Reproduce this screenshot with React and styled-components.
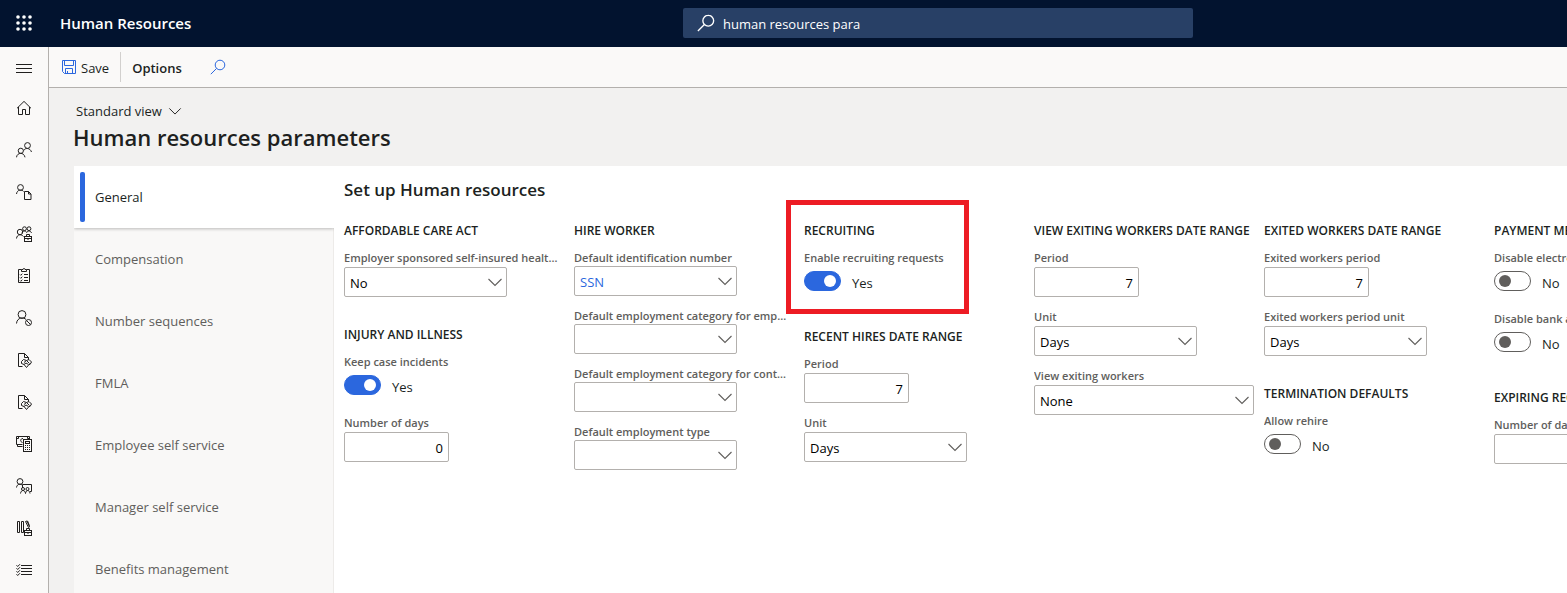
import React, { useId } from "react";
import styled, { createGlobalStyle, css } from "styled-components";

const GlobalStyle = createGlobalStyle`
  * { box-sizing: border-box; }
  body {
    margin: 0;
    font-family: "Open Sans", "Noto Sans", sans-serif;
    font-size: 13px;
    line-height: 20px;
    color: #201f1e;
    background: #f2f1f0;
  }
  button, input, select { font: inherit; color: inherit; margin: 0; }
`;

const Page = styled.div`
  height: 100vh;
  display: flex;
  flex-direction: column;
  overflow: hidden;
`;

const Header = styled.header`
  flex: none;
  height: 47px;
  padding-bottom: 1px;
  display: grid;
  grid-template-columns: 48px minmax(200px, 635px) minmax(200px, 510px) 1fr;
  align-items: center;
  background: #02132f;
  color: #fff;
`;

const iconButton = css`
  display: flex;
  align-items: center;
  justify-content: center;
  padding: 0;
  border: 0;
  background: none;
`;

const Waffle = styled.button`
  ${iconButton}
  height: 46px;
`;

const Product = styled.span`
  padding-left: 12px;
  font-size: 15px;
  font-weight: 600;
`;

const SearchBox = styled.label`
  height: 30px;
  display: flex;
  align-items: center;
  gap: 8px;
  padding: 0 14px;
  border-radius: 2px;
  background: #284066;
  input {
    flex: 1;
    min-width: 0;
    padding: 2px 0 0;
    border: 0;
    outline: 0;
    background: none;
    color: #fff;
  }
`;

const Body = styled.div`
  flex: 1;
  min-height: 0;
  display: flex;
`;

const Rail = styled.nav`
  flex: none;
  width: 49px;
  border-right: 1px solid #b3b0ad;
  background: #faf9f8;
`;

const RailButton = styled.button`
  ${iconButton}
  width: 48px;
  height: ${(p) => (p.$menu ? 40 : 42)}px;
`;

const Main = styled.main`
  flex: 1;
  min-width: 0;
  display: flex;
  flex-direction: column;
`;

const ActionBar = styled.div`
  flex: none;
  height: 41px;
  display: flex;
  align-items: center;
  border-bottom: 1px solid #b3b0ad;
  padding-left: 12px;
  background: #faf9f8;
`;

const Action = styled.button`
  ${iconButton}
  gap: 4px;
  padding-top: 2px;
  font-weight: ${(p) => (p.$strong ? 600 : 400)};
  svg { margin-bottom: 2px; }
`;

const Divider = styled.span`
  width: 1px;
  height: 30px;
  margin: 0 11px;
  background: #d2d0ce;
`;

const Finder = styled(Action)`
  margin-left: 28px;
`;

const PageHead = styled.div`
  flex: none;
  height: 78px;
  padding: 13px 0 0 24px;
`;

const ViewButton = styled.button`
  ${iconButton}
  gap: 6px;
  height: 20px;
  padding-left: 3px;
`;

const Title = styled.h1`
  margin: 0;
  font-size: 22px;
  line-height: 32px;
  font-weight: 600;
`;

const Panel = styled.section`
  flex: 1;
  min-height: 0;
  display: flex;
  margin-left: 25px;
  background: #fff;
`;

const Tabs = styled.div`
  flex: none;
  width: 260px;
  background: #f9f8f7;
  border-right: 1px solid #edebe9;
`;

const Tab = styled.button`
  display: flex;
  align-items: center;
  gap: 10px;
  width: 260px;
  height: 62px;
  padding: 0 6px;
  border: 0;
  background: ${(p) => (p.$active ? "#fff" : "none")};
  color: ${(p) => (p.$active ? "#201f1e" : "#605e5c")};
  box-shadow: ${(p) => (p.$active ? "0 1px 3px rgba(0, 0, 0, 0.25)" : "none")};
  clip-path: ${(p) => (p.$active ? "inset(0 0 -6px 0)" : "none")};
  &::before {
    content: "";
    width: 5px;
    height: 50px;
    border-radius: 2px;
    background: ${(p) => (p.$active ? "#2b67de" : "transparent")};
  }
`;

const Content = styled.div`
  flex: 1;
  min-width: 0;
  overflow: hidden;
  padding: 12px 0 0 10px;
`;

const SectionTitle = styled.h2`
  margin: 0 0 20px;
  font-size: 17px;
  line-height: 24px;
  font-weight: 600;
`;

const Columns = styled.div`
  display: grid;
  grid-auto-flow: column;
  grid-auto-columns: 220px;
  column-gap: 10px;
`;

const Column = styled.div`
  display: flex;
  flex-direction: column;
  gap: 29px;
`;

const GroupBox = styled.section`
  position: relative;
`;

const GroupTitle = styled.h3`
  margin: 0 0 10px;
  font-size: 12px;
  line-height: 18px;
  font-weight: 600;
  white-space: nowrap;
`;

const Fields = styled.div`
  display: flex;
  flex-direction: column;
  gap: 12px;
`;

const Highlight = styled.span`
  position: absolute;
  top: -22px;
  left: -18px;
  width: 183px;
  height: 114px;
  border: 5px solid #ed1c24;
  pointer-events: none;
`;

const FieldBox = styled.div`
  display: flex;
  flex-direction: column;
  gap: ${(p) => (p.$dense ? 0 : 1)}px;
`;

const FieldLabel = styled.label`
  max-width: 214px;
  overflow: hidden;
  font-size: 11px;
  line-height: 16px;
  font-weight: 600;
  color: #605e5c;
  white-space: nowrap;
  text-overflow: ellipsis;
`;

const control = css`
  height: 30px;
  border: 1px solid #b3b0ad;
  border-radius: 2px;
  background: #fff;
`;

const NumberInput = styled.input`
  ${control}
  width: 105px;
  padding: 2px 5px 0;
  color: #000;
  text-align: right;
`;

const SelectWrap = styled.div`
  display: grid;
  align-items: center;
  width: ${(p) => (p.$wide ? 220 : 163)}px;
  select, svg { grid-area: 1 / 1; }
  svg { justify-self: end; margin-right: 4px; pointer-events: none; }
`;

const Select = styled.select`
  ${control}
  width: 100%;
  padding: 2px 5px 0;
  appearance: none;
  color: ${(p) => (p.$link ? "#2b67de" : "#000")};
`;

const ToggleRow = styled.div`
  height: 32px;
  display: flex;
  align-items: center;
  gap: 11px;
`;

const Toggle = styled.input`
  appearance: none;
  width: 37px;
  height: 20px;
  margin-bottom: 4px;
  display: flex;
  align-items: center;
  padding: 0 4px;
  border: 1px solid #605e5c;
  border-radius: 10px;
  background: #fff;
  &::before {
    content: "";
    width: 12px;
    height: 12px;
    border-radius: 50%;
    background: #605e5c;
  }
  &:checked {
    justify-content: flex-end;
    border-color: #2b67de;
    background: #2b67de;
  }
  &:checked::before { background: #fff; }
`;

const Svg = ({ size = 16, color = "#201f1e", children }) => (
  <svg width={size} height={size} viewBox={`0 0 ${size} ${size}`} fill="none" stroke={color} strokeWidth="1" aria-hidden="true">
    {children}
  </svg>
);

const Chevron = ({ width = 16, color = "#605e5c" }) => (
  <svg width={width} height="16" viewBox="0 0 16 16" fill="none" stroke={color} strokeWidth="1.1" aria-hidden="true">
    <path d="M1.500 5 8 11.500 14.500 5" />
  </svg>
);

const Magnifier = ({ color, size = 16, weight = 1 }) => (
  <svg width={size} height={size} viewBox="0 0 16 16" fill="none" stroke={color} strokeWidth={weight} aria-hidden="true">
    <circle cx="10" cy="6" r="4.800" />
    <path d="M6.600 9.400 0.800 15.200" />
  </svg>
);

const LockCase = () => (
  <>
    <rect x="8.500" y="10.500" width="7" height="5" fill="#faf9f8" />
    <path d="M10.500 10V8.500h3V10M8.500 12.500h7M12 12v2" />
  </>
);

const DocHands = () => (
  <Svg>
    <path d="M6.500 14.500h-4v-13h6l4 4v2M8.500 1.500v4h4" />
    <path d="M5.500 9.500 7.500 7.500l3 1 2.500-1 2.500 2.500-1.500 2.500h-1L10.500 15.500 8 12.500 5.500 11.500zM8 10.500l2.500-2 3 3M8 12.500l2-1.500 2.500 1.500" />
  </Svg>
);

const railIcons = [
  ["Expand the navigation pane", <Svg><path d="M0 5.500h16M0 9.500h16M0 13.500h16" /></Svg>],
  ["Home", <Svg><path d="M1 8.300 8 1.400l7 6.900M2.500 7v7.500h4v-5h3v5h4V7" /></Svg>],
  ["Personnel management", <Svg><circle cx="11.500" cy="3.500" r="2.900" /><path d="M7.800 8.500C8.800 5.700 14 5.500 15.500 10" /><circle cx="4.800" cy="8.800" r="2.600" /><path d="M.5 15.300c.5-5 7.500-5.500 8.500 0" /></Svg>],
  ["Employee self service", <Svg><circle cx="4.500" cy="3.500" r="2.900" /><path d="M.5 10c.5-4.500 5.500-5 7-2.500M8.500 7.500h4l2.500 2.500v5.500H8.500zM12.500 7.500V10H15" /></Svg>],
  ["Manager self service", <Svg><circle cx="4" cy="6" r="2.700" /><path d="M.5 12.500C1 8 5.500 8 7.500 10.500" /><circle cx="8.500" cy="2.700" r="1.900" /><circle cx="13" cy="2.700" r="1.900" /><path d="M6 6.800C7 4.500 10 4.500 10.700 6.500 11.500 4.500 14.800 4.500 15.500 7" /><LockCase /></Svg>],
  ["Compliance", <Svg><path d="M5.500 1.500h-3v13h11v-13h-3M5.500 3.500v-2h1.500a1 1 0 0 1 2 0h1.500v2zM8 6.500h4M8 9.500h4M8 12.500h4M4 6.500l.8.800L6.300 5.700M4 9.500l.8.800 1.500-1.600M4 12.500l.8.800 1.500-1.600" /></Svg>],
  ["Leave and absence", <Svg><circle cx="6" cy="4.500" r="3.900" /><path d="M.5 13.500C1 7 8 7 10 9.500" /><circle cx="12.500" cy="12.500" r="3" /><path d="m10.500 10.500 4 4" /></Svg>],
  ["Benefits management", <DocHands />],
  ["Benefits", <DocHands />],
  ["Payroll", <Svg><path d="M6.500 8.500h-6v-8h13v3M1.500 8.500v2h5M2.500.5v2h-2M7 2.500C4 2.500 4 6 6.500 6.500M11.500.5v2h2" /><rect x="7.500" y="3.500" width="8" height="12" /><rect x="9.500" y="5.500" width="4" height="2" /><path d="M9 9.500h6M9 11.500h6M9 13.500h6" strokeDasharray="1 1" /></Svg>],
  ["Learning", <Svg><circle cx="4" cy="3.500" r="2.900" /><path d="M.5 9.500C1 5.500 5 5.500 6.500 7.500V6.500h9v7H14M6.500 7v3" /><circle cx="7" cy="11" r="1.500" /><circle cx="11.500" cy="11" r="1.500" /><path d="M4.500 15.500c.5-4 4.500-4 5 0 .5-4 4-4 4.500 0" /></Svg>],
  ["Organization administration", <Svg><path d="M1.500 1.500h2v11h-2zM5.500 1.500h2v11h-2zM9.500 1.500l1.500-.5 2.500 6-1 .5zM11.500.800l2 5" /><LockCase /></Svg>],
  ["Task list", <Svg><path d="M5 3.500h11M5 6.500h11M5 9.500h11M5 12.500h11" /><path d="m.5 3.200 1.200 1.300L4 2.200M.5 6.200l1.200 1.300L4 5.200M.5 9.200l1.200 1.300L4 8.200M.5 12.200l1.200 1.300L4 11.200" /></Svg>],
];

const tabs = ["General", "Compensation", "Number sequences", "FMLA", "Employee self service", "Manager self service", "Benefits management"];

const columns = [
  [
    { title: "AFFORDABLE CARE ACT", fields: [{ type: "select", label: "Employer sponsored self-insured health coverage", value: "No" }] },
    { title: "INJURY AND ILLNESS", fields: [{ type: "toggle", label: "Keep case incidents", on: true }, { type: "number", label: "Number of days", value: "0" }] },
  ],
  [
    {
      title: "HIRE WORKER",
      dense: true,
      fields: [
        { type: "select", label: "Default identification number", value: "SSN", link: true },
        { type: "select", label: "Default employment category for employees", value: "" },
        { type: "select", label: "Default employment category for contractors", value: "" },
        { type: "select", label: "Default employment type", value: "" },
      ],
    },
  ],
  [
    { title: "RECRUITING", highlight: true, fields: [{ type: "toggle", label: "Enable recruiting requests", on: true }] },
    { title: "RECENT HIRES DATE RANGE", fields: [{ type: "number", label: "Period", value: "7" }, { type: "select", label: "Unit", value: "Days" }] },
  ],
  [
    {
      title: "VIEW EXITING WORKERS DATE RANGE",
      fields: [
        { type: "number", label: "Period", value: "7" },
        { type: "select", label: "Unit", value: "Days" },
        { type: "select", label: "View exiting workers", value: "None", wide: true },
      ],
    },
  ],
  [
    { title: "EXITED WORKERS DATE RANGE", fields: [{ type: "number", label: "Exited workers period", value: "7" }, { type: "select", label: "Exited workers period unit", value: "Days" }] },
    { title: "TERMINATION DEFAULTS", fields: [{ type: "toggle", label: "Allow rehire", on: false }] },
  ],
  [
    { title: "PAYMENT METHODS", fields: [{ type: "toggle", label: "Disable electronic payments", on: false }, { type: "toggle", label: "Disable bank accounts", on: false }] },
    { title: "EXPIRING RECORDS", fields: [{ type: "number", label: "Number of days", value: "0" }] },
  ],
];

function Field({ type, label, value, on, link, wide, dense }) {
  const id = useId();
  return (
    <FieldBox $dense={dense}>
      <FieldLabel htmlFor={id}>{label}</FieldLabel>
      {type === "number" && <NumberInput id={id} defaultValue={value} inputMode="numeric" />}
      {type === "select" && (
        <SelectWrap $wide={wide}>
          <Select id={id} defaultValue={value} $link={link}>
            <option>{value}</option>
          </Select>
          <Chevron />
        </SelectWrap>
      )}
      {type === "toggle" && (
        <ToggleRow>
          <Toggle id={id} type="checkbox" role="switch" defaultChecked={on} />
          <span>{on ? "Yes" : "No"}</span>
        </ToggleRow>
      )}
    </FieldBox>
  );
}

function Group({ title, fields, highlight, dense }) {
  return (
    <GroupBox>
      <GroupTitle>{title}</GroupTitle>
      <Fields>
        {fields.map((f) => (
          <Field key={f.label} dense={dense} {...f} />
        ))}
      </Fields>
      {highlight && <Highlight />}
    </GroupBox>
  );
}

export default function App() {
  return (
    <Page>
      <GlobalStyle />
      <Header>
        <Waffle aria-label="App launcher">
          <svg width="16" height="16" viewBox="0 0 16 16" fill="#fff" aria-hidden="true">
            {[0, 6, 12].map((y) => [0, 6, 12].map((x) => <circle key={`${x}-${y}`} cx={x + 2} cy={y + 2} r="1.800" />))}
          </svg>
        </Waffle>
        <Product>Human Resources</Product>
        <SearchBox>
          <Magnifier color="#fff" size={18} weight={1.2} />
          <input aria-label="Search for a page" defaultValue="human resources para" />
        </SearchBox>
      </Header>
      <Body>
        <Rail>
          {railIcons.map(([name, icon], i) => (
            <RailButton key={name} aria-label={name} $menu={i === 0}>
              {icon}
            </RailButton>
          ))}
        </Rail>
        <Main>
          <ActionBar>
            <Action>
              <Svg color="#2b67de">
                <path d="M1.500 1.500h13v13h-11l-2-2zM3.500 1.500v5h9v-5M4.500 14.500v-5h7v5M6.500 12v2.500" />
              </Svg>
              Save
            </Action>
            <Divider />
            <Action $strong>Options</Action>
            <Finder aria-label="Search actions">
              <Magnifier color="#2b67de" />
            </Finder>
          </ActionBar>
          <PageHead>
            <ViewButton>
              Standard view <Chevron width={14} color="#201f1e" />
            </ViewButton>
            <Title>Human resources parameters</Title>
          </PageHead>
          <Panel>
            <Tabs role="tablist">
              {tabs.map((t, i) => (
                <Tab key={t} role="tab" aria-selected={i === 0} $active={i === 0}>
                  {t}
                </Tab>
              ))}
            </Tabs>
            <Content>
              <SectionTitle>Set up Human resources</SectionTitle>
              <Columns>
                {columns.map((groups) => (
                  <Column key={groups[0].title}>
                    {groups.map((g) => (
                      <Group key={g.title} {...g} />
                    ))}
                  </Column>
                ))}
              </Columns>
            </Content>
          </Panel>
        </Main>
      </Body>
    </Page>
  );
}
